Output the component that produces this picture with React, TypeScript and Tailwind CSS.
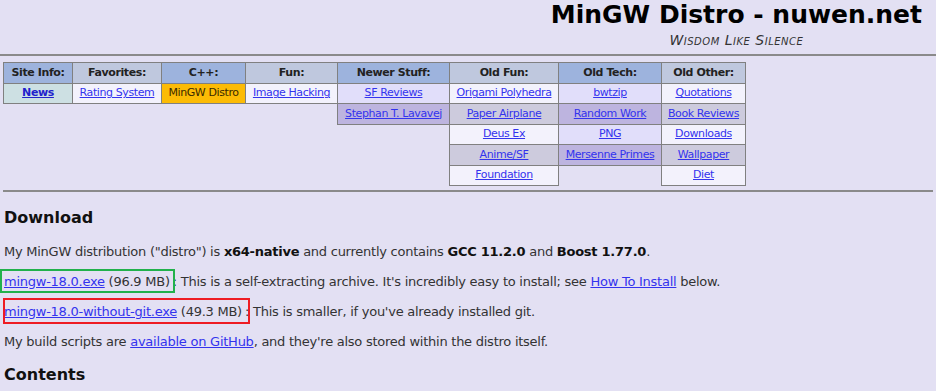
import React from "react";

type Cell = { label: string; bg: string; bold?: boolean; current?: boolean };
type Column = { title: string; head: string; width: string; cells: Cell[] };

const WHITE = "bg-[#f3f2fc]";
const LAV = "bg-[#e1defa]";
const PURPLE = "bg-[#bdb4df]";
const GRAY = "bg-[#cdcbdd]";
const BLUE_HEAD = "bg-[#9db3dd]";
const GRAY_HEAD = "bg-[#bfc8de]";

const columns: Column[] = [
  { title: "Site Info:", head: BLUE_HEAD, width: "w-[70px]", cells: [{ label: "News", bg: "bg-[#cde0e3]", bold: true }] },
  { title: "Favorites:", head: GRAY_HEAD, width: "w-[90px]", cells: [{ label: "Rating System", bg: WHITE }] },
  { title: "C++:", head: BLUE_HEAD, width: "w-[85px]", cells: [{ label: "MinGW Distro", bg: "bg-[#fcbb05]", current: true }] },
  { title: "Fun:", head: GRAY_HEAD, width: "w-[93px]", cells: [{ label: "Image Hacking", bg: WHITE }] },
  {
    title: "Newer Stuff:",
    head: BLUE_HEAD,
    width: "w-[113px]",
    cells: [
      { label: "SF Reviews", bg: LAV },
      { label: "Stephan T. Lavavej", bg: PURPLE },
    ],
  },
  {
    title: "Old Fun:",
    head: GRAY_HEAD,
    width: "w-[110px]",
    cells: [
      { label: "Origami Polyhedra", bg: WHITE },
      { label: "Paper Airplane", bg: GRAY },
      { label: "Deus Ex", bg: WHITE },
      { label: "Anime/SF", bg: GRAY },
      { label: "Foundation", bg: WHITE },
    ],
  },
  {
    title: "Old Tech:",
    head: BLUE_HEAD,
    width: "w-[104px]",
    cells: [
      { label: "bwtzip", bg: LAV },
      { label: "Random Work", bg: PURPLE },
      { label: "PNG", bg: LAV },
      { label: "Mersenne Primes", bg: PURPLE },
    ],
  },
  {
    title: "Old Other:",
    head: GRAY_HEAD,
    width: "w-[85px]",
    cells: [
      { label: "Quotations", bg: WHITE },
      { label: "Book Reviews", bg: GRAY },
      { label: "Downloads", bg: WHITE },
      { label: "Wallpaper", bg: GRAY },
      { label: "Diet", bg: WHITE },
    ],
  },
];

function NavColumn({ col, first }: { col: Column; first: boolean }) {
  return (
    <div className={`${col.width} ${first ? "" : "-ml-px"} flex flex-col self-start border border-[#808080]`}>
      <div className={`${col.head} h-[20px] flex items-center justify-center font-bold text-[#222]`}>
        {col.title}
      </div>
      {col.cells.map((c) => (
        <div
          key={c.label}
          className={`${c.bg} h-[20.4px] border-t border-[#808080] flex items-center justify-center whitespace-nowrap`}
        >
          {c.current ? (
            <span className="text-[#3a2a00]">{c.label}</span>
          ) : (
            <a href="#" className={`underline ${c.bold ? "font-bold text-[#2222cc]" : "text-[#3333ee]"}`}>
              {c.label}
            </a>
          )}
        </div>
      ))}
    </div>
  );
}

function Marked({ color, inset, children }: { color: string; inset: string; children: React.ReactNode }) {
  return (
    <span className="relative">
      {children}
      <span className={`pointer-events-none absolute border-2 ${inset} ${color}`} />
    </span>
  );
}

export default function App() {
  return (
    <div className="min-h-[391px] bg-[#e3e0f3] px-[4px] text-[13px] tracking-[-0.25px] text-[#333] [font-family:'DejaVu_Sans',sans-serif]">
      <header className="flex justify-end pr-[10px] tracking-normal">
        <div className="flex flex-col items-center">
          <h1 className="text-[25px] leading-[30px] font-bold text-black">MinGW Distro - nuwen.net</h1>
          <div className="mt-[3px] text-[14px] tracking-[0.5px] italic [font-variant:small-caps] leading-[14px] text-[#333]">
            Wisdom Like Silence
          </div>
        </div>
      </header>
      <hr className="-mx-[4px] mt-[7px] border-t-2 border-[#8a8a8a]" />

      <nav className="-ml-px mt-[6px] flex text-[11px] tracking-[-0.4px]">
        {columns.map((col, i) => (
          <NavColumn key={col.title} col={col} first={i === 0} />
        ))}
      </nav>
      <hr className="-mx-[1px] mt-[4px] border-t-2 border-[#8a8a8a]" />

      <h2 className="mt-[16px] text-[16px] leading-[20px] font-bold tracking-normal text-[#111]">Download</h2>
      <p className="mt-[16px] leading-[16px]">
        My MinGW distribution ("distro") is <b className="text-[#111]">x64-native</b> and currently contains{" "}
        <b className="text-[#111]">GCC 11.2.0</b> and <b className="text-[#111]">Boost 1.77.0</b>.
      </p>
      <p className="mt-[14px] leading-[16px]">
        <Marked color="border-[#22b14c]" inset="-left-[4px] -right-[5px] -top-[5px] -bottom-[4px]">
          <a href="#" className="text-[#3333ee] underline">mingw-18.0.exe</a> (96.9 MB)
        </Marked>
        <span className="ml-[3px]">: This is a self-extracting archive. It's incredibly easy to install; see </span>
        <a href="#" className="text-[#3333ee] underline">How To Install</a> below.
      </p>
      <p className="mt-[14px] leading-[16px]">
        <Marked color="border-[#ee1c24]" inset="-left-[1px] -right-[8px] -top-[6px] -bottom-[5px]">
          <a href="#" className="text-[#3333ee] underline">mingw-18.0-without-git.exe</a> (49.3 MB)
        </Marked>
        <span className="ml-[3px]">: This is smaller, if you've already installed git.</span>
      </p>
      <p className="mt-[14px] leading-[16px]">
        My build scripts are <a href="#" className="text-[#3333ee] underline">available on GitHub</a>, and they're
        also stored within the distro itself.
      </p>
      <h2 className="mt-[15px] text-[16px] leading-[20px] font-bold tracking-normal text-[#111]">Contents</h2>
    </div>
  );
}
